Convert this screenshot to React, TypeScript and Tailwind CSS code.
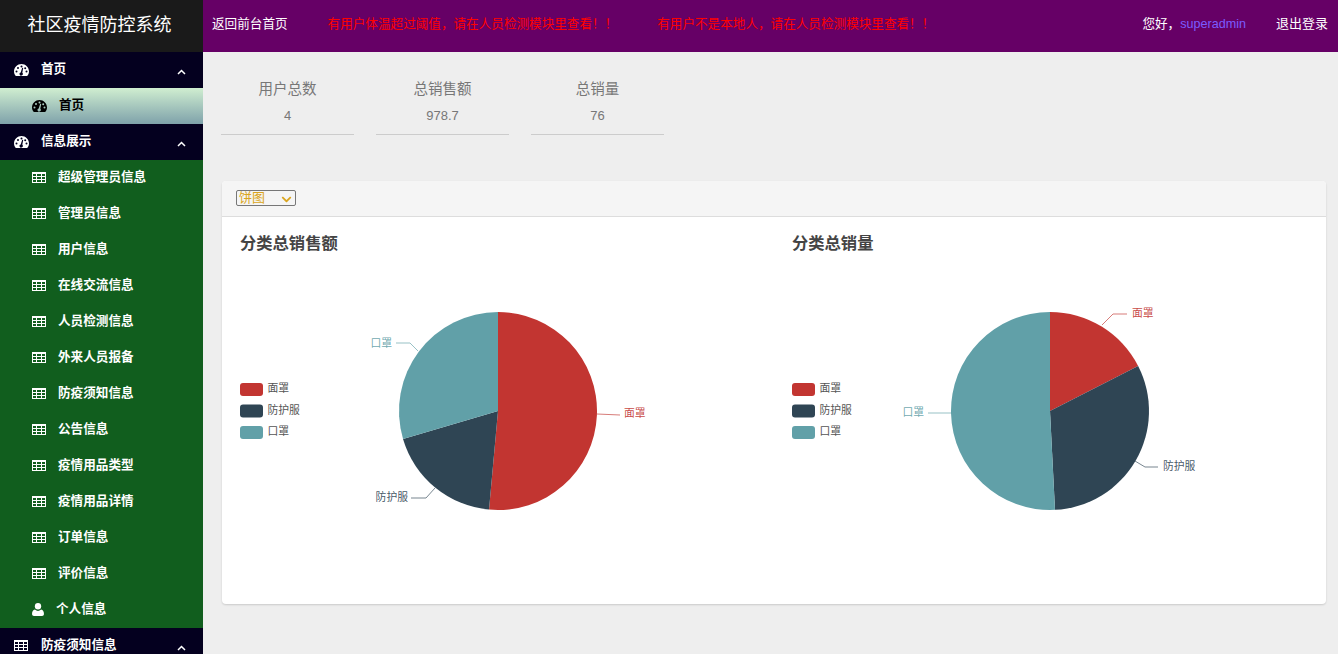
import React from "react";
import { FaChevronDown } from "react-icons/fa";

const font = { fontFamily: '"Liberation Sans", "Noto Sans CJK SC", sans-serif' };
const RED = "#c23531";
const DARK = "#2f4554";
const TEAL = "#61a0a8";

function Gauge() {
  return (
    <svg width="15" height="12" viewBox="0 0 15 12" className="shrink-0" fill="currentColor" fillRule="evenodd">
      <path d="M1.8 12C.7 10.6 0 9.1 0 7.4 0 3.3 3.4 0 7.5 0S15 3.3 15 7.4c0 1.7-.7 3.2-1.8 4.6zM2.5 6.6a1 1 0 1 0 0 2 1 1 0 0 0 0-2zM4 3a1 1 0 1 0 0 2 1 1 0 0 0 0-2zM7.5 1.6a1 1 0 1 0 0 2 1 1 0 0 0 0-2zM11.2 3.2a1 1 0 1 0 0 2 1 1 0 0 0 0-2zM12.5 6.6a1 1 0 1 0 0 2 1 1 0 0 0 0-2zM8.2 3.8L6.7 8.4a1.6 1.6 0 1 0 1.6.4L9.2 4z" />
    </svg>
  );
}

function TableIcon() {
  return (
    <svg width="14" height="11" viewBox="0 0 14 11" className="mb-[2px] shrink-0" fill="currentColor" shapeRendering="crispEdges">
      <path d="M0 0h14v11H0zM1 2v2h3V2zM5 2v2h4V2zM10 2v2h3V2zM1 5v2h3V5zM5 5v2h4V5zM10 5v2h3V5zM1 8v2h3V8zM5 8v2h4V8zM10 8v2h3V8z" fillRule="evenodd" />
    </svg>
  );
}

function UserIcon() {
  return (
    <svg width="12" height="13" viewBox="0 0 11 12" className="mb-[2px] shrink-0" fill="currentColor">
      <ellipse cx="5.5" cy="3" rx="2.9" ry="3" />
      <path d="M0 10.2C0 8 .9 6.2 2.6 6a4.2 4.2 0 0 0 5.8 0C10.100 6.200 11 8 11 10.200 11 11.300 10.200 12 9.200 12H1.800C.8 12 0 11.300 0 10.200z" />
    </svg>
  );
}

function Caret() {
  return (
    <svg width="9" height="6" viewBox="0 0 9 6" className="mt-[4px] shrink-0" fill="none" stroke="currentColor" strokeWidth="1.5">
      <path d="M1 5L4.500 1.500L8 5" />
    </svg>
  );
}

function Parent({ icon, text }: { icon: React.ReactNode; text: string }) {
  return (
    <div className="flex h-9 items-center bg-[#04001f] pl-[14px] pr-[17px] text-[12.6px] font-bold text-white">
      <span className="flex w-[14px] justify-center">{icon}</span>
      <span className="ml-[13px] flex-1 pb-[2px]">{text}</span>
      <Caret />
    </div>
  );
}

function Child({ text }: { text: string }) {
  return (
    <div className="flex h-9 items-center pl-[32px] text-[12.6px] font-bold text-white">
      <TableIcon />
      <span className="ml-[12px] pb-[2px]">{text}</span>
    </div>
  );
}

const children = [
  "超级管理员信息",
  "管理员信息",
  "用户信息",
  "在线交流信息",
  "人员检测信息",
  "外来人员报备",
  "防疫须知信息",
  "公告信息",
  "疫情用品类型",
  "疫情用品详情",
  "订单信息",
  "评价信息",
];

function polar(a: number, r = 99) {
  const t = (a * Math.PI) / 180;
  return [276 + r * Math.sin(t), 195 - r * Math.cos(t)];
}

function slice(a: number, b: number) {
  const [x1, y1] = polar(a);
  const [x2, y2] = polar(b);
  return `M276 195L${x1} ${y1}A99 99 0 ${b - a > 180 ? 1 : 0} 1 ${x2} ${y2}Z`;
}

type Label = { text: string; color: string; line: string; x: number; y: number; anchor?: "start" | "end" };

function Chart({ title, angles, labels }: { title: string; angles: [number, number]; labels: Label[] }) {
  const legend: [string, string][] = [
    ["面罩", RED],
    ["防护服", DARK],
    ["口罩", TEAL],
  ];
  return (
    <svg width="552" height="387" viewBox="0 1 552 387" className="block" style={font}>
      <text x="18" y="33" fontSize="16.3" fontWeight="700" fill="#444">
        {title}
      </text>
      {legend.map(([t, c], i) => (
        <g key={t}>
          <rect x="18" y={167 + i * 21.5} width="23" height="13" rx="3" fill={c} />
          <text x="45.500" y={176 + i * 21.5} fontSize="10.800" fill="#555">
            {t}
          </text>
        </g>
      ))}
      <path d={slice(0, angles[0])} fill={RED} />
      <path d={slice(angles[0], angles[1])} fill={DARK} />
      <path d={slice(angles[1], 360)} fill={TEAL} />
      {labels.map((l) => (
        <g key={l.text}>
          <path d={l.line} fill="none" stroke={l.color} strokeOpacity="0.65" />
          <text x={l.x} y={l.y} fontSize="10.800" fill={l.color} fillOpacity="0.9" textAnchor={l.anchor ?? "start"}>
            {l.text}
          </text>
        </g>
      ))}
    </svg>
  );
}

export default function App() {
  return (
    <div className="flex h-[654px] w-[1338px] overflow-hidden bg-[#eeeeee]" style={font}>
      <aside className="w-[203px] shrink-0 bg-[#115e1e]">
        <div className="flex h-[52px] items-center justify-center bg-[#1a1a1a] pb-[2px] pr-[4px] text-[18px] text-white">社区疫情防控系统</div>
        <Parent icon={<Gauge />} text="首页" />
        <div className="flex h-9 items-center bg-gradient-to-b from-[#d0eed0] to-[#7fa2aa] pl-[32px] text-[12.6px] font-bold text-black">
          <Gauge />
          <span className="ml-[12px] pb-[2px]">首页</span>
        </div>
        <Parent icon={<Gauge />} text="信息展示" />
        {children.map((t) => (
          <Child key={t} text={t} />
        ))}
        <div className="flex h-9 items-center pl-[32px] text-[12.6px] font-bold text-white">
          <UserIcon />
          <span className="ml-[12px] pb-[2px]">个人信息</span>
        </div>
        <Parent icon={<TableIcon />} text="防疫须知信息" />
      </aside>
      <div className="flex min-w-0 flex-1 flex-col">
        <header className="flex h-[52px] shrink-0 items-center bg-[#660066] pb-[4px] pl-[9px] pr-[10px] text-[12.6px] text-white">
          <span>返回前台首页</span>
          <span className="ml-[40px] text-[#ff0000]">有用户体温超过阈值，请在人员检测模块里查看！！</span>
          <span className="ml-[40px] text-[#ff0000]">有用户不是本地人，请在人员检测模块里查看！！</span>
          <span className="ml-auto">
            您好，<span className="text-[#7a5cff]">superadmin</span>
          </span>
          <span className="ml-[30px] text-[13px]">退出登录</span>
        </header>
        <main className="pl-[18px] pr-[12px]">
          <div className="flex gap-[22px] pt-[27px]">
            {[
              ["用户总数", "4"],
              ["总销售额", "978.7"],
              ["总销量", "76"],
            ].map(([a, b]) => (
              <div key={a} className="h-[56px] w-[133px] border-b border-[#cccccc] text-center text-[#777]">
                <div className="h-[20px] text-[14.5px] leading-[20px]">{a}</div>
                <div className="mt-[7px] text-[13px] leading-[20px]">{b}</div>
              </div>
            ))}
          </div>
          <section className="ml-px mt-[46px] overflow-hidden rounded-[4px] bg-white shadow-[0_1px_2px_rgba(0,0,0,0.15)]">
            <div className="flex h-[36px] items-center border-b border-[#dddddd] bg-[#f5f5f5] pb-[2px] pl-[14px]">
              <div className="relative h-[16px] w-[60px] rounded-[2px] border border-[#777] text-[13px] leading-[13px] text-[#daa520]">
                <span className="pl-[2px]">饼图</span>
                <FaChevronDown className="absolute right-[3px] top-[3px] text-[11px]" />
              </div>
            </div>
            <div className="flex">
              <Chart
                title="分类总销售额"
                angles={[185.2, 253.6]}
                labels={[
                  { text: "面罩", color: RED, line: "M375 198L398 199", x: 402, y: 201 },
                  { text: "防护服", color: DARK, line: "M213 272L204 282L189 282", x: 186, y: 285, anchor: "end" },
                  { text: "口罩", color: TEAL, line: "M174 127L188 127L196 135", x: 170, y: 131, anchor: "end" },
                ]}
              />
              <Chart
                title="分类总销量"
                angles={[62.9, 177.1]}
                labels={[
                  { text: "面罩", color: RED, line: "M328 109L339 98L353 98", x: 358, y: 101 },
                  { text: "防护服", color: DARK, line: "M361 245L371 251L384 251", x: 389, y: 254 },
                  { text: "口罩", color: TEAL, line: "M178 197L154 197", x: 150, y: 200, anchor: "end" },
                ]}
              />
            </div>
          </section>
        </main>
      </div>
    </div>
  );
}
